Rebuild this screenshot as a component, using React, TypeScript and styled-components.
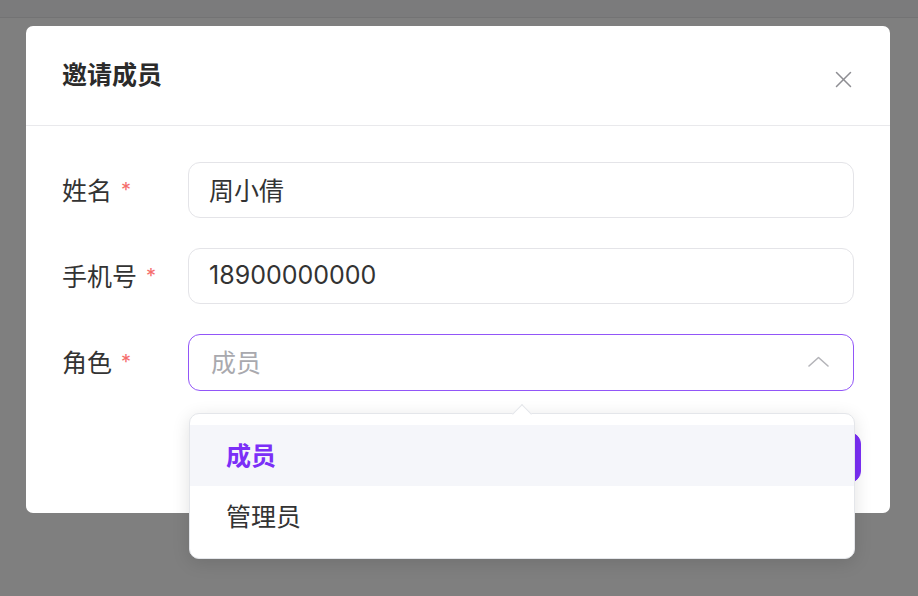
import React from 'react';
import styled, { createGlobalStyle } from 'styled-components';

const GlobalStyle = createGlobalStyle`
    html, body {
        margin: 0;
        padding: 0;
        background: #7f7f7f;
    }
    * {
        box-sizing: border-box;
    }
`;

const FONT = `"Inter", "Noto Sans CJK SC", sans-serif`;

const Backdrop = styled.div`
    width: 918px;
    height: 596px;
    overflow: hidden;
    background: #7f7f7f;
    font-family: ${FONT};
    color: #333;
`;

const TopStrip = styled.div`
    height: 18px;
    background: #7b7b7c;
    border-bottom: 1px solid #737374;
`;

const Modal = styled.div`
    width: 864px;
    margin: 8px 0 0 26px;
    background: #fff;
    border-radius: 7px;
`;

const ModalHeader = styled.div`
    height: 100px;
    padding: 0 35px 0 36px;
    display: flex;
    align-items: center;
    justify-content: space-between;
    border-bottom: 1px solid #e9e9ec;
`;

const ModalTitle = styled.div`
    font-size: 25px;
    font-weight: 700;
    color: #2b2b2b;
    margin-top: -5px;
`;

const CloseButton = styled.button`
    width: 24px;
    height: 24px;
    margin-top: 8px;
    padding: 0;
    border: none;
    background: none;
    display: flex;
    align-items: center;
    justify-content: center;
    color: #8e8e93;
`;

const ModalBody = styled.div`
    padding: 36px 36px 0 36px;
    display: flex;
    flex-direction: column;
    gap: 30px;
`;

const FormRow = styled.div`
    display: flex;
    align-items: center;
`;

const Label = styled.div`
    width: 126px;
    flex-shrink: 0;
    font-size: 25px;
    color: #333;
    display: flex;
    align-items: center;
    padding-bottom: 3px;
`;

const Required = styled.span`
    color: #f56c6c;
    font-size: 20px;
    margin-left: 9px;
    margin-top: 2px;
`;

const TextInput = styled.div`
    flex: 1;
    height: 56px;
    border: 1px solid #e4e4e8;
    border-radius: 12px;
    padding: 0 20px 3px;
    display: flex;
    align-items: center;
    font-size: 25px;
    color: #333;
`;

const SelectWrap = styled.div`
    flex: 1;
    position: relative;
`;

const SelectBox = styled.div<{ $open?: boolean }>`
    height: 57px;
    border: 1px solid ${p => (p.$open ? '#9256f8' : '#e4e4e8')};
    border-radius: 12px;
    padding: 0 24px 3px 22px;
    display: flex;
    align-items: center;
    justify-content: space-between;
    font-size: 25px;
`;

const Placeholder = styled.span`
    color: #a9a9ae;
`;

const Dropdown = styled.div`
    position: absolute;
    top: calc(100% + 22px);
    left: 1px;
    width: 666px;
    padding: 11px 0 11px;
    background: #fff;
    border: 1px solid #e4e6ea;
    border-radius: 10px;
    box-shadow: 0 4px 18px rgba(0, 0, 0, 0.12);
    z-index: 10;

    &::before {
        content: '';
        position: absolute;
        top: -7px;
        left: 50%;
        width: 13px;
        height: 13px;
        margin-left: -7px;
        background: #fff;
        border-top: 1px solid #e4e6ea;
        border-left: 1px solid #e4e6ea;
        transform: rotate(45deg);
    }
`;

const Option = styled.div<{ $selected?: boolean }>`
    height: 61px;
    padding: 0 36px 4px;
    display: flex;
    align-items: center;
    font-size: 25px;
    font-weight: ${p => (p.$selected ? 700 : 400)};
    color: ${p => (p.$selected ? '#7b2ff7' : '#333')};
    background: ${p => (p.$selected ? '#f5f6fa' : '#fff')};
`;

const ModalFooter = styled.div`
    padding: 41px 29px 30px;
    display: flex;
    justify-content: flex-end;
    gap: 20px;
`;

const FooterButton = styled.button<{ $primary?: boolean }>`
    height: 51px;
    padding: 0 34px;
    border-radius: 12px;
    font-family: ${FONT};
    font-size: 22px;
    border: 1px solid ${p => (p.$primary ? '#7b2ff7' : '#dcdfe6')};
    background: ${p => (p.$primary ? '#7b2ff7' : '#fff')};
    color: ${p => (p.$primary ? '#fff' : '#333')};
`;

const CloseIcon = () => (
    <svg width="17" height="17" viewBox="0 0 17 17" fill="none" stroke="currentColor" strokeWidth="1.5" strokeLinecap="round">
        <line x1="1.5" y1="1.5" x2="15.5" y2="15.5" />
        <line x1="15.5" y1="1.5" x2="1.5" y2="15.5" />
    </svg>
);

const ChevronUp = () => (
    <svg width="21" height="11" viewBox="0 0 21 11" fill="none" stroke="#b4b4b9" strokeWidth="1.6" strokeLinecap="round" strokeLinejoin="round">
        <polyline points="1,10 10.5,1.5 20,10" />
    </svg>
);

const roles = ['成员', '管理员'];

const App: React.FC = (): JSX.Element => {
    const selected = '成员';

    return (
        <>
            <GlobalStyle />
            <Backdrop>
                <TopStrip />
                <Modal>
                    <ModalHeader>
                        <ModalTitle>邀请成员</ModalTitle>
                        <CloseButton><CloseIcon /></CloseButton>
                    </ModalHeader>
                    <ModalBody>
                        <FormRow>
                            <Label>姓名<Required>*</Required></Label>
                            <TextInput>周小倩</TextInput>
                        </FormRow>
                        <FormRow>
                            <Label>手机号<Required>*</Required></Label>
                            <TextInput>18900000000</TextInput>
                        </FormRow>
                        <FormRow>
                            <Label>角色<Required>*</Required></Label>
                            <SelectWrap>
                                <SelectBox $open>
                                    <Placeholder>{selected}</Placeholder>
                                    <ChevronUp />
                                </SelectBox>
                                <Dropdown>
                                    {roles.map(r => (
                                        <Option key={r} $selected={r === selected}>{r}</Option>
                                    ))}
                                </Dropdown>
                            </SelectWrap>
                        </FormRow>
                    </ModalBody>
                    <ModalFooter>
                        <FooterButton>取消</FooterButton>
                        <FooterButton $primary>发送邀请</FooterButton>
                    </ModalFooter>
                </Modal>
            </Backdrop>
        </>
    );
};

export default App;
